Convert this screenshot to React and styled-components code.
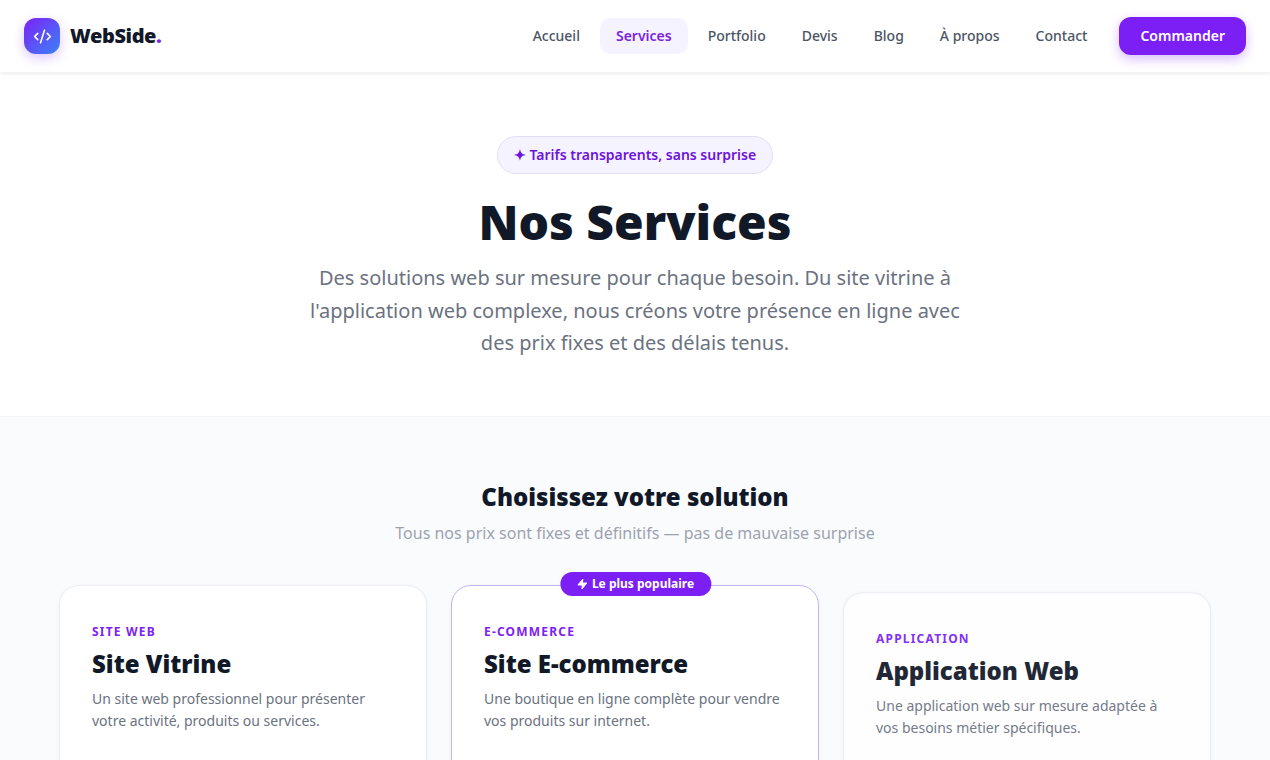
import React from 'react';
import styled, { createGlobalStyle } from 'styled-components';

const GlobalStyle = createGlobalStyle`
  * { box-sizing: border-box; }
  html, body { margin: 0; padding: 0; height: 760px; overflow: hidden; background: #fff; }
  body { font-family: "Noto Sans", sans-serif; color: #111827; }
`;

const navItems = ['Accueil', 'Services', 'Portfolio', 'Devis', 'Blog', 'À propos', 'Contact'];

const plans = [
  { tag: 'SITE WEB', title: 'Site Vitrine', text: 'Un site web professionnel pour présenter votre activité, produits ou services.' },
  { tag: 'E-COMMERCE', title: 'Site E-commerce', text: 'Une boutique en ligne complète pour vendre vos produits sur internet.', popular: true },
  { tag: 'APPLICATION', title: 'Application Web', text: 'Une application web sur mesure adaptée à vos besoins métier spécifiques.', late: true },
];

export default function App() {
  return (
    <Page>
      <GlobalStyle />
      <Header>
        <Brand>
          <LogoBox>
            <svg width="19" height="19" viewBox="0 0 24 24" fill="none" stroke="#fff" strokeWidth="2" strokeLinecap="round" strokeLinejoin="round">
              <path d="m18 16 4-4-4-4" />
              <path d="m6 8-4 4 4 4" />
              <path d="m14.5 4-5 16" />
            </svg>
          </LogoBox>
          <BrandName>WebSide<Dot>.</Dot></BrandName>
        </Brand>
        <Nav>
          {navItems.map((item) => (
            <NavLink key={item} $active={item === 'Services'}>{item}</NavLink>
          ))}
          <OrderButton>Commander</OrderButton>
        </Nav>
      </Header>

      <Hero>
        <Pill>✦ Tarifs transparents, sans surprise</Pill>
        <HeroTitle>Nos Services</HeroTitle>
        <HeroText>
          Des solutions web sur mesure pour chaque besoin. Du site vitrine à l'application web complexe, nous créons votre présence en ligne avec des prix fixes et des délais tenus.
        </HeroText>
      </Hero>

      <Plans>
        <PlansTitle>Choisissez votre solution</PlansTitle>
        <PlansSub>Tous nos prix sont fixes et définitifs — pas de mauvaise surprise</PlansSub>
        <Grid>
          {plans.map((plan) => (
            <Card key={plan.tag} $popular={plan.popular} $late={plan.late}>
              {plan.popular && (
                <Badge>
                  <svg width="12" height="12" viewBox="0 0 24 24" fill="#fff" stroke="#fff" strokeWidth="2" strokeLinejoin="round">
                    <path d="M13 2 3 14h9l-1 8 10-12h-9l1-8z" />
                  </svg>
                  Le plus populaire
                </Badge>
              )}
              <Tag>{plan.tag}</Tag>
              <CardTitle>{plan.title}</CardTitle>
              <CardText>{plan.text}</CardText>
            </Card>
          ))}
        </Grid>
      </Plans>
    </Page>
  );
}

const Page = styled.div`
  height: 760px;
  overflow: hidden;
`;

const Header = styled.header`
  height: 73px;
  padding: 0 24px;
  display: flex;
  align-items: center;
  justify-content: space-between;
  background: #fff;
  border-bottom: 1px solid #f3f4f6;
  box-shadow: 0 1px 3px rgba(0, 0, 0, 0.08);
  position: relative;
`;

const Brand = styled.div`
  display: flex;
  align-items: center;
  gap: 10px;
`;

const LogoBox = styled.div`
  width: 36px;
  height: 36px;
  border-radius: 12px;
  display: flex;
  align-items: center;
  justify-content: center;
  background: linear-gradient(135deg, #7c22f5, #3b82f6);
  box-shadow: 0 4px 12px rgba(124, 34, 245, 0.25);
`;

const BrandName = styled.span`
  font-size: 20px;
  line-height: 28px;
  font-weight: 900;
  letter-spacing: -0.4px;
  color: #111827;
`;

const Dot = styled.span`
  color: #7c22f5;
`;

const Nav = styled.nav`
  display: flex;
  align-items: center;
  gap: 4px;
`;

const NavLink = styled.a`
  height: 36px;
  padding: 0 16px 2px;
  display: flex;
  align-items: center;
  border-radius: 10px;
  font-size: 14px;
  font-weight: ${(p) => (p.$active ? 600 : 500)};
  color: ${(p) => (p.$active ? '#7c22e0' : '#4b5563')};
  background: ${(p) => (p.$active ? '#f5f3ff' : 'transparent')};
`;

const OrderButton = styled.button`
  height: 38px;
  margin-left: 12px;
  padding: 0 21px 2px;
  border: 0;
  border-radius: 12px;
  background: #7c1ff5;
  color: #fff;
  font-family: inherit;
  font-size: 14px;
  font-weight: 600;
  box-shadow: 0 4px 12px rgba(124, 31, 245, 0.3);
`;

const Hero = styled.section`
  height: 344px;
  padding-top: 63px;
  display: flex;
  flex-direction: column;
  align-items: center;
  background: #fff;
  border-bottom: 1px solid #f3f4f6;
`;

const Pill = styled.div`
  height: 38px;
  padding: 0 16px 2px;
  display: flex;
  align-items: center;
  border-radius: 999px;
  border: 1px solid #e4def5;
  background: #f5f3ff;
  color: #6d14d8;
  font-size: 14px;
  font-weight: 600;
`;

const HeroTitle = styled.h1`
  margin: 16px 0 0;
  font-size: 48px;
  line-height: 64px;
  font-weight: 900;
  color: #111827;
`;

const HeroText = styled.p`
  margin: 8px 0 0;
  width: 672px;
  text-align: center;
  font-size: 20px;
  line-height: 32.5px;
  color: #6b7280;
`;

const Plans = styled.section`
  height: 343px;
  padding: 64px 59px 0;
  background: #fafbfd;
  overflow: hidden;
`;

const PlansTitle = styled.h2`
  margin: 0;
  text-align: center;
  font-size: 24px;
  line-height: 32px;
  font-weight: 900;
  color: #111827;
`;

const PlansSub = styled.p`
  margin: 8px 0 0;
  text-align: center;
  font-size: 16px;
  line-height: 24px;
  color: #9ca3af;
`;

const Grid = styled.div`
  margin-top: 40px;
  display: grid;
  grid-template-columns: repeat(3, 1fr);
  gap: 24px;
`;

const Card = styled.article`
  position: relative;
  height: 340px;
  padding: 37px 32px 32px;
  background: #fff;
  border-radius: 20px;
  border: 1px solid ${(p) => (p.$popular ? '#c4b5f0' : '#eceef1')};
  box-shadow: 0 1px 4px rgba(0, 0, 0, 0.05);
  ${(p) => p.$late && 'transform: translateY(7.3px); opacity: 0.93;'}
`;

const Badge = styled.div`
  position: absolute;
  top: -14px;
  left: calc(50% + 0.5px);
  transform: translateX(-50%);
  height: 24px;
  padding: 0 17px 1px 16px;
  display: flex;
  align-items: center;
  gap: 4px;
  white-space: nowrap;
  border-radius: 999px;
  background: #7c1ff5;
  color: #fff;
  font-size: 12px;
  font-weight: 700;
`;

const Tag = styled.div`
  font-size: 12px;
  line-height: 18px;
  font-weight: 700;
  letter-spacing: 1.2px;
  color: #7c22f5;
`;

const CardTitle = styled.h3`
  margin: 7px 0 0;
  font-size: 24px;
  line-height: 32px;
  font-weight: 900;
  color: #111827;
`;

const CardText = styled.p`
  margin: 8px 0 0;
  font-size: 14px;
  line-height: 22px;
  color: #6b7280;
`;
